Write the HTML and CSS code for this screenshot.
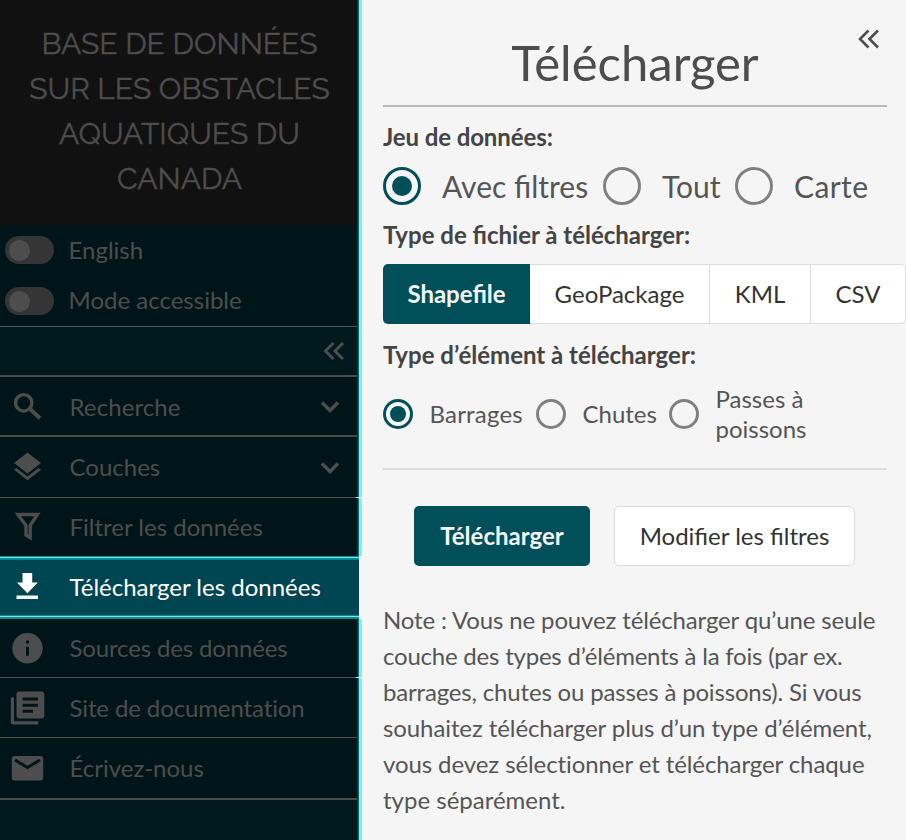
FILE: index.html
```html
<!DOCTYPE html>
<html lang="fr">
<head>
<meta charset="utf-8">
<title>Base de données sur les obstacles aquatiques du Canada</title>
<link rel="stylesheet" href="styles.css">
</head>
<body>
<div class="app">
  <aside class="sidebar">
    <h1 class="brand cell"><span class="b1">BASE DE DONNÉES</span><span class="b2">SUR LES OBSTACLES</span><span class="b3">AQUATIQUES DU</span><span class="b4">CANADA</span></h1>
    <div class="toggles cell">
      <div class="toggle"><i class="switch"></i><span class="t1">English</span></div>
      <div class="toggle"><i class="switch"></i><span class="t2">Mode accessible</span></div>
    </div>
    <div class="collapse cell"><svg class="dbl" viewBox="0 0 22 20"><path d="M10.500 2 2.500 10l8 8M20 2l-8 8 8 8"/></svg></div>
    <nav>
      <a class="item cell thick"><svg class="ico" viewBox="0 0 36 36"><circle cx="14.700" cy="13.800" r="8.200" fill="none" stroke="currentColor" stroke-width="3.400"/><path d="M20.500 19.500 31 29.300" fill="none" stroke="currentColor" stroke-width="3.900"/></svg><span class="l1">Recherche</span><svg class="chev" viewBox="0 0 20 14"><path d="m2 2.500 8 8 8-8"/></svg></a>
      <a class="item cell thin glow i2"><svg class="ico" viewBox="0 0 36 36"><path d="M18.500 2.500 32 13 18.500 23.500 5 13zM18.500 26.500 29.600 17.900 32 19.800 18.500 30.300 5 19.800l2.400-1.900z"/></svg><span class="l2">Couches</span><svg class="chev" viewBox="0 0 20 14"><path d="m2 2.500 8 8 8-8"/></svg></a>
      <a class="item cell i3"><svg class="ico" viewBox="0 0 36 36"><path d="M8.800 5.500h19.700L21.200 16.500v12.200l-4.200-2.700v-9.500z" fill="none" stroke="currentColor" stroke-width="3.300"/></svg><span class="l3">Filtrer les données</span></a>
      <a class="item active"><svg class="ico" viewBox="0 0 36 36"><path d="M13.500 3h9.700v9.500h5.600L18.400 23.200 8 12.500h5.500zM7.500 25.500h21.500v3.400H7.500z"/></svg><span class="l4">Télécharger les données</span></a>
      <a class="item cell thin glow i5"><svg class="ico" viewBox="0 0 36 36"><path fill-rule="evenodd" d="M18.500 2a15.200 15.200 0 1 0 0 30.400A15.200 15.200 0 1 0 18.500 2zM17 9.600h3v3h-3zM17 15.800h3v9h-3z"/></svg><span class="l5">Sources des données</span></a>
      <a class="item cell thin i6"><svg class="ico" viewBox="0 0 36 36"><path fill-rule="evenodd" d="M10.500 1.500h21.800a3 3 0 0 1 3 3v21a3 3 0 0 1-3 3H10.500a3 3 0 0 1-3-3v-21a3 3 0 0 1 3-3zM13.500 7.500v3H29v-3zM13.500 13.700v3H29v-3zM13.500 19.800v3H24v-3zM1.800 7.500v24a3 3 0 0 0 3 3h24.500v-3.200H5V7.500z"/></svg><span class="l6">Site de documentation</span></a>
      <a class="item cell thick i7"><svg class="ico" viewBox="0 0 36 36"><path d="M5.500 5h26a2.700 2.700 0 0 1 2.700 2.700v19a2.700 2.700 0 0 1-2.700 2.700h-26a2.700 2.700 0 0 1-2.700-2.700v-19A2.700 2.700 0 0 1 5.500 5z"/><path class="fold" d="m6 9 12.500 7.500L31 9"/></svg><span class="l7">Écrivez-nous</span></a>
    </nav>
    <div class="rest cell"></div>
  </aside>
  <main class="panel">
    <svg class="close" viewBox="0 0 22 20"><path d="M10.500 1.500 2 10l8.500 8.500M20 1.500 11.500 10l8.500 8.500"/></svg>
    <h2><span>Télécharger</span></h2>
    <h3 class="h-a"><span>Jeu de données:</span></h3>
    <div class="radios big">
      <label class="ra"><i class="radio on"></i><span>Avec filtres</span></label>
      <label class="rb"><i class="radio"></i><span>Tout</span></label>
      <label class="rc"><i class="radio"></i><span>Carte</span></label>
    </div>
    <h3 class="h-b"><span>Type de fichier à télécharger:</span></h3>
    <div class="formats">
      <button class="on f1"><span>Shapefile</span></button><button class="f2"><span>GeoPackage</span></button><button class="f3"><span>KML</span></button><button class="f4"><span>CSV</span></button>
    </div>
    <h3 class="h-c"><span>Type d’élément à télécharger:</span></h3>
    <div class="radios small">
      <label class="rd"><i class="radio on"></i><span>Barrages</span></label>
      <label class="re"><i class="radio"></i><span>Chutes</span></label>
      <label class="rf"><i class="radio"></i><span>Passes à<br>poissons</span></label>
    </div>
    <div class="actions">
      <button class="primary"><span>Télécharger</span></button>
      <button class="secondary"><span>Modifier les filtres</span></button>
    </div>
    <p class="note"><span class="n1">Note : Vous ne pouvez télécharger qu’une seule</span><br><span class="n2">couche des types d’éléments à la fois (par ex.</span><br><span class="n3">barrages, chutes ou passes à poissons). Si vous</span><br><span class="n4">souhaitez télécharger plus d’un type d’élément,</span><br><span class="n5">vous devez sélectionner et télécharger chaque</span><br><span>type séparément.</span></p>
  </main>
</div>
</body>
</html>
```
FILE: styles.css
```css
* { box-sizing: border-box; }
body { margin: 0; font-family: Lato, "Open Sans", sans-serif; font-size: 24px; color: #555; background: #f5f5f5; }
.app { display: flex; width: 906px; height: 840px; overflow: hidden; }

.sidebar { flex: none; width: 362px; display: flex; flex-direction: column; color: #4d4d4d; }
.cell { position: relative; background: linear-gradient(#001519, #001519) no-repeat 0 0 / 359px 100%; }
.cell::after { content: ""; position: absolute; top: 0; bottom: 0; right: 0; width: 5px; background: linear-gradient(90deg, #003a3c 0 1px, #006f70 1px 2px, #7df0ec 2px 5px); }
.brand { margin: 0; height: 225px; padding: 21px 3px 0 0; background: #111; font-family: Raleway, Lato, sans-serif; font-size: 30px; line-height: 45px; font-weight: 400; -webkit-text-stroke: .4px; display: flex; flex-direction: column; align-items: center; }
.toggles { height: 102px; padding: 9px 0 0 5px; }
.toggle { display: flex; align-items: center; height: 32px; margin-bottom: 18px; }
.switch { width: 49px; height: 28px; border-radius: 14px; background: #353535; padding: 4px; margin: 1px 14.500px 1px 0; }
.toggle + .toggle .switch { margin-top: 2px; margin-bottom: 0; }
.toggle span { margin-top: -1px; }
.switch::before { content: ""; display: block; width: 21px; height: 21px; border-radius: 50%; background: #4d4d4d; }
.toggles::before, .thin::before, .collapse::before, .thick::before { content: ""; position: absolute; left: 0; right: 3px; bottom: 0; height: 1px; background: #535353; }
.collapse::before, .thick::before { height: 2px; background: #484c4d; }
.thin.glow::before { right: 0; z-index: 1; background: linear-gradient(90deg, #535353 0 353px, #0a7a7c 355px, #fff 357px); }
.collapse { height: 50px; background-image: linear-gradient(#00191d, #00191d); }
.dbl { position: absolute; left: 323px; top: 14px; width: 22px; height: 20px; fill: none; stroke: #4d4d4d; stroke-width: 3; }
.item { display: flex; align-items: center; height: 60px; padding-left: 9px; }
.item > span { margin-left: 24.500px; line-height: 36px; white-space: nowrap; padding-bottom: 1px; }
.ico { flex: none; width: 36px; height: 36px; fill: currentColor; }
.chev { margin-left: auto; margin-right: 22px; width: 20px; height: 14px; fill: none; stroke: #4d4d4d; stroke-width: 3.400; }
.fold { fill: none; stroke: #001519; stroke-width: 3; }
.l1 { letter-spacing: .1px; }
.l5 { letter-spacing: -.15px; }
.l6 { letter-spacing: -.12px; }
.i2 { height: 61px; }
.i3 { height: 58px; }
.active { width: 359px; height: 63px; background: #004552; color: #fff; border-top: 4px solid #008b90; border-bottom: 4px solid #008b90; position: relative; }
.active::before, .active::after { content: ""; position: absolute; left: 0; right: 0; height: 1px; background: #80e6e4; }
.active::before { top: -3px; }
.active::after { bottom: -2px; }
.i5 { height: 59px; }
.i7 { height: 62px; }
.item.i7 > span { padding-bottom: 3px; }
.rest { flex: 1; background-image: linear-gradient(#00191d, #00191d); }

.panel { position: relative; flex: 1; min-width: 0; padding: 0 19px 0 21px; }
.close { position: absolute; left: 496px; top: 29px; width: 22px; height: 20px; fill: none; stroke: #4d4d4d; stroke-width: 2.600; }
h2 { margin: 0; height: 107px; padding-top: 32px; border-bottom: 2px solid #b8b8b8; text-align: center; font-size: 49px; line-height: 60px; font-weight: 400; color: #4d4d4d; }
h3 { margin: 0; font-size: 24px; line-height: 30px; height: 30px; font-weight: 700; color: #444; white-space: nowrap; }
.h-a { margin-top: 15px; letter-spacing: -.1px; }
.h-b { margin-top: 14px; }
.h-c { margin-top: 16px; }
.radios { display: flex; align-items: center; white-space: nowrap; }
label { display: flex; align-items: center; }
.big { height: 40px; margin-top: 14px; font-size: 30px; }
.big span { margin-top: -1px; }
.radio { flex: none; width: 38px; height: 38px; border: 3px solid #808080; border-radius: 50%; margin-right: 21px; display: grid; place-items: center; }
.radio.on { border-color: #004f59; }
.radio.on::before { content: ""; width: 20px; height: 20px; border-radius: 50%; background: #004f59; }
.ra { width: 220px; }
.rb { width: 132px; }
.rc { letter-spacing: .4px; }
.formats { display: flex; width: 523px; height: 60px; margin-top: 14px; }
button { flex: none; font: 24px Lato, sans-serif; color: #333; background: #fff; border: 1px solid #dcdcdc; border-radius: 5px; padding: 0 0 2px; white-space: nowrap; }
.formats button { border-radius: 0; border-width: 1px 0 1px 1px; }
.formats .on { background: #004f59; color: #f5f5f5; border: 0; border-radius: 5px 0 0 5px; font-weight: 700; }
.f1 { width: 147px; }
.formats .f2 { width: 179px; border-left: 0; }
.f3 { width: 101px; }
.formats .f4 { width: 96px; border-right-width: 1px; border-radius: 0 5px 5px 0; }
.small { height: 60px; margin-top: 14px; line-height: 30px; }
.small .radio { width: 30px; height: 30px; margin-right: 16.500px; }
.small .radio.on::before { width: 16px; height: 16px; }
.rd { width: 153px; }
.rd span { letter-spacing: .2px; }
.re { width: 133px; }
.actions { display: flex; gap: 24px; margin-top: 24px; border-top: 2px solid #ddd; padding: 36px 0 0 31px; }
.primary { width: 176px; height: 60px; background: #004f59; color: #f5f5f5; border: 0; font-weight: 700; }
.secondary { width: 241px; height: 60px; }
.note { margin: 36px 0 0; line-height: 36px; white-space: nowrap; }
.n1 { letter-spacing: -.14px; }
.n2 { letter-spacing: -.22px; }
.n3 { letter-spacing: -.17px; }
.n4, .n5 { letter-spacing: -.09px; }
```
